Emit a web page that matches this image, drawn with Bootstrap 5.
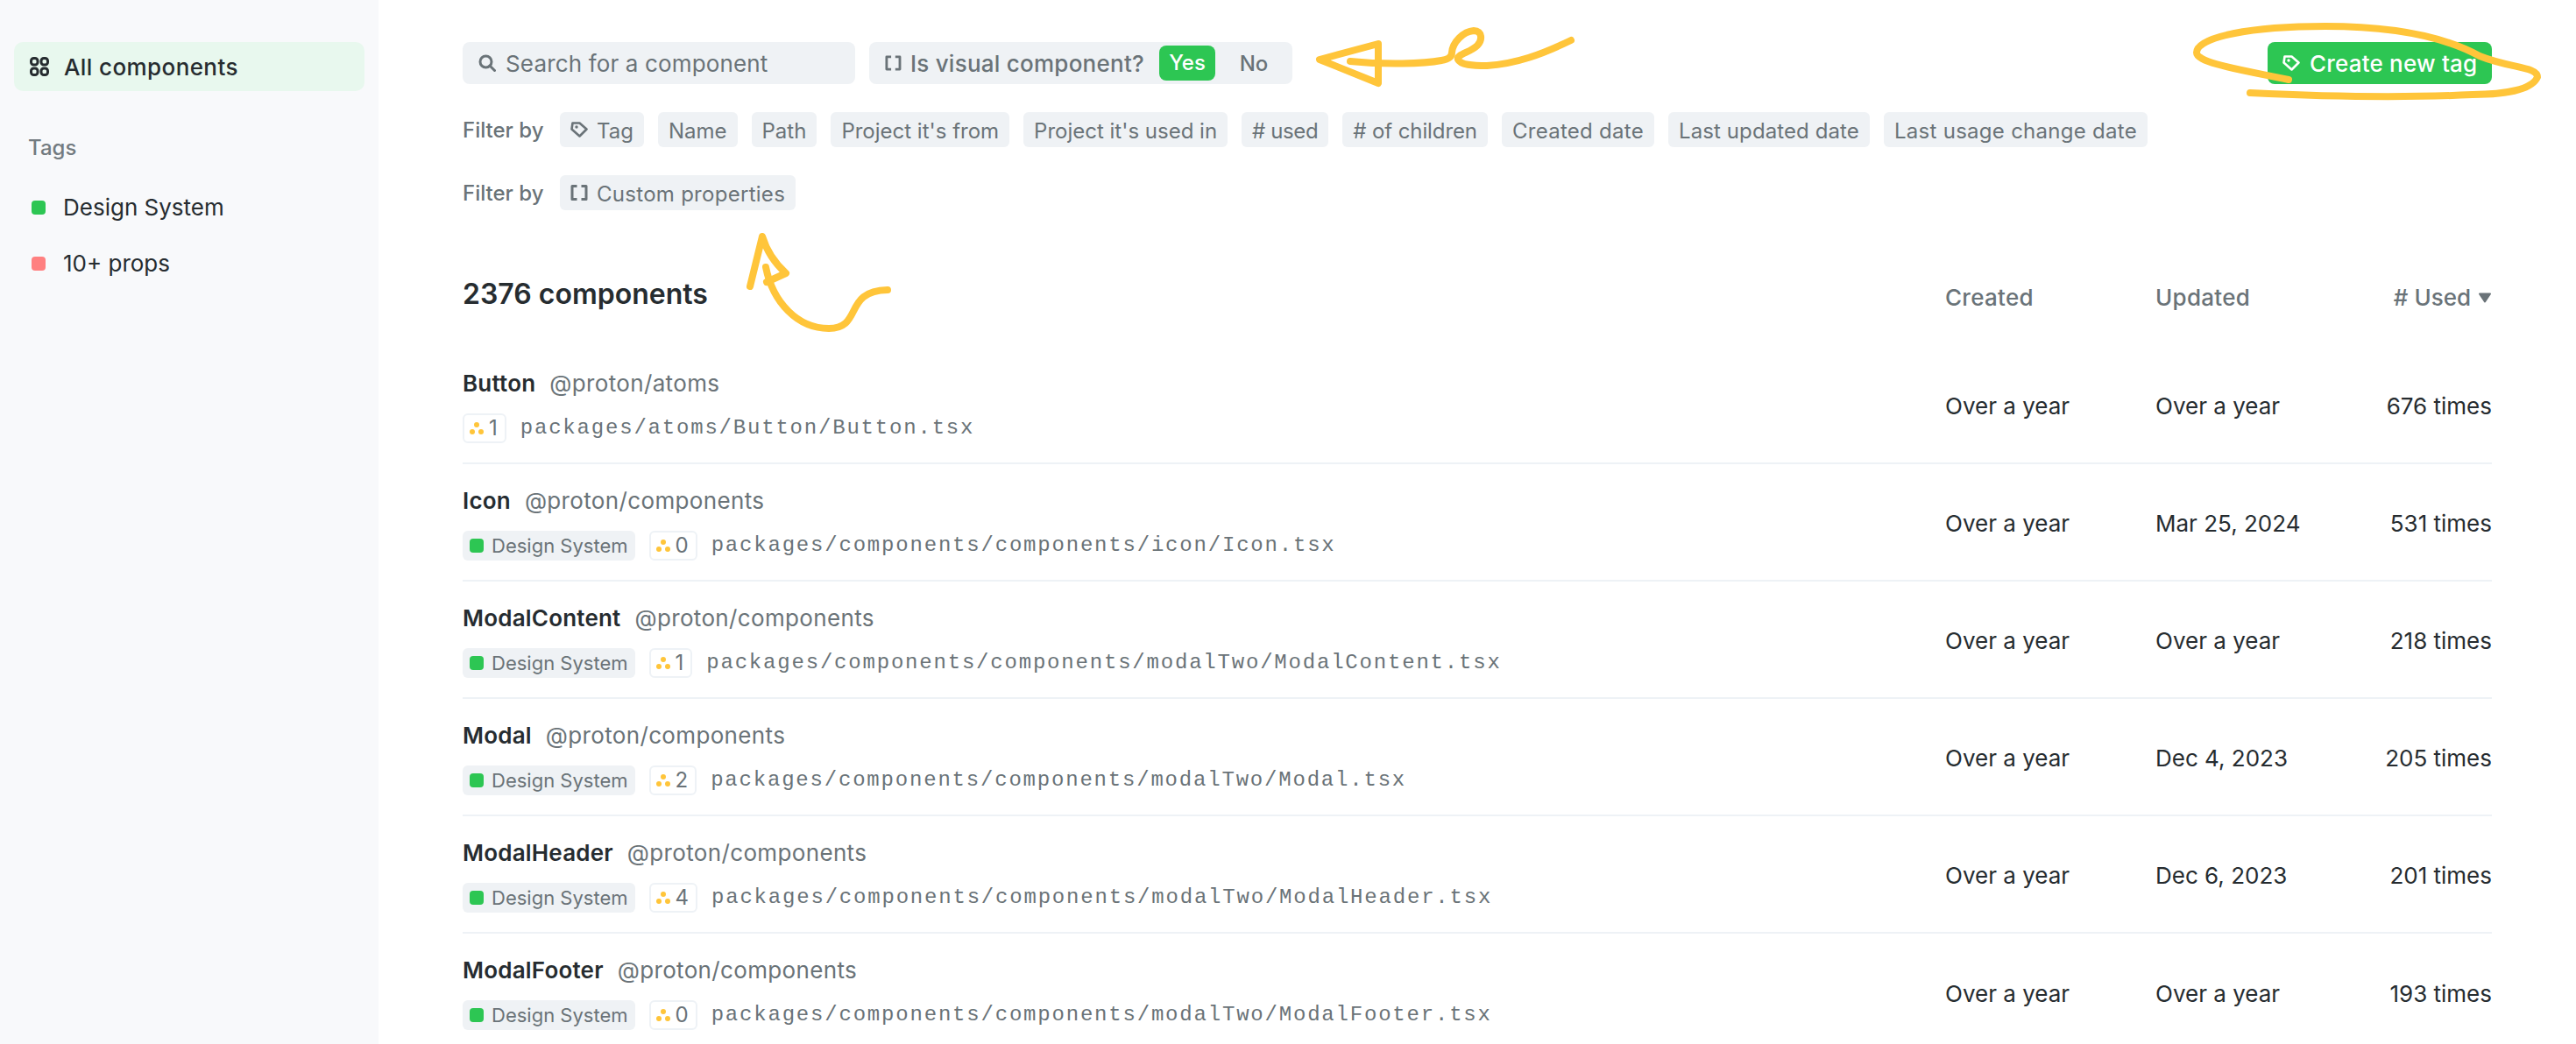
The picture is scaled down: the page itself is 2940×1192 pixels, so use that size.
<!DOCTYPE html>
<html lang="en">

<head>
    <meta charset="UTF-8">
    <meta name="viewport" content="width=device-width, initial-scale=1.0">
    <title>Components</title>
    <link href="https://cdn.jsdelivr.net/npm/bootstrap@5.3.0/dist/css/bootstrap.min.css" rel="stylesheet">
    <style>
        html, body {
            height: 1192px;
            overflow: hidden;
        }

        body {
            font-family: Inter, "Liberation Sans", sans-serif;
            font-size: 26px;
            line-height: 32px;
            color: #262c30;
            background: #fff;
            position: relative;
        }

        .side-col {
            width: 432px;
            height: 1192px;
            flex: none;
            padding: 48px 16px;
            background: #f8f9fb;
        }

        .side-active {
            height: 56px;
            padding-left: 18px;
            gap: 17px;
            border-radius: 10px;
            background: #e8f8ee;
            font-weight: 500;
            letter-spacing: .4px;
        }

        .side-active span {
            padding-top: 2px;
        }

        .side-title {
            margin: 49px 0 28px 16px;
            font-size: 24px;
            font-weight: 500;
            color: #737b80;
        }

        .side-item {
            height: 48px;
            margin-bottom: 16px;
            padding-left: 20px;
            gap: 20px;
        }

        .tag-dot {
            width: 16px;
            height: 16px;
            flex: none;
            border-radius: 4px;
        }

        .dot-green { background: #2dc653; }
        .dot-red { background: #ff8080; }

        .main-col {
            width: 2508px;
            padding: 48px 96px 0;
        }

        .top-box {
            height: 48px;
            border-radius: 8px;
            background: #eff2f5;
            color: #6a7378;
            white-space: nowrap;
        }

        .top-box span {
            padding-top: 2px;
        }

        .search-box {
            width: 448px;
            padding-left: 18px;
            gap: 11px;
            letter-spacing: .15px;
        }

        .visual-box {
            width: 483px;
            padding: 4px 0 4px 18px;
            gap: 10px;
            font-weight: 500;
            letter-spacing: .25px;
        }

        .top-box .visual-yes {
            width: 64px;
            height: 40px;
            flex: none;
            margin-left: 7px;
            padding-top: 0;
            border-radius: 8px;
            background: #2dc653;
            color: #fff;
            font-size: 24px;
            letter-spacing: 0;
        }

        .visual-no {
            width: 88px;
            flex: none;
            margin-left: -10px;
            font-size: 24px;
            letter-spacing: 0;
        }

        .new-tag-btn {
            width: 256px;
            height: 48px;
            padding-left: 17px;
            gap: 11px;
            border-radius: 8px;
            background: #2dc653;
            color: #fff;
            font-weight: 500;
            letter-spacing: .2px;
        }

        .new-tag-btn span {
            padding-top: 2px;
        }

        .filter-line {
            gap: 16px;
            margin-top: 32px;
            font-size: 24px;
            color: #6a7378;
        }

        .filter-label {
            width: 95px;
            font-weight: 500;
            padding-top: 2px;
        }

        .filter-chip {
            height: 40px;
            padding: 3px 12px 0;
            gap: 10px;
            border-radius: 6px;
            background: #eff2f5;
        }

        .filter-chip svg {
            margin-top: -3px;
        }

        .chip-tight { letter-spacing: -.4px; }
        .chip-tight-sm { letter-spacing: -.1px; }
        .chip-wide-sm { letter-spacing: .1px; }
        .chip-wide { letter-spacing: .28px; }

        .list-head {
            height: 48px;
            margin-top: 72px;
            margin-bottom: 36px;
        }

        .list-title {
            font-size: 32px;
            font-weight: 600;
            margin: 0;
            line-height: 48px;
        }

        .head-cell {
            font-weight: 500;
            color: #6a7378;
            padding-top: 8px;
        }

        .head-date {
            letter-spacing: .3px;
        }

        .cell-date {
            width: 240px;
            flex: none;
        }

        .cell-used {
            width: 144px;
            flex: none;
            white-space: nowrap;
        }

        .row-cell {
            padding-top: 4px;
        }

        .comp-row {
            height: 134px;
            border-bottom: 2px solid #eef2f6;
        }

        .comp-row:last-child {
            border-bottom: 0;
        }

        .comp-main {
            padding-top: 26px;
        }

        .comp-name {
            font-weight: 600;
            letter-spacing: .2px;
            margin-right: 16px;
        }

        .comp-project {
            color: #6a7378;
            letter-spacing: .35px;
        }

        .comp-meta {
            height: 34px;
            margin-top: 18px;
            gap: 16px;
            font-size: 22px;
            color: #6a7378;
        }

        .ds-badge {
            height: 34px;
            padding: 0 8px 0 8px;
            gap: 9px;
            border-radius: 6px;
            background: #eff2f5;
        }

        .child-badge {
            height: 34px;
            padding: 0 8px 0 6px;
            gap: 6px;
            border: 2px solid #eef2f6;
            border-radius: 6px;
            font-size: 24px;
        }

        .comp-path {
            font-family: "Liberation Mono", monospace;
            font-size: 24px;
            letter-spacing: 1.8px;
        }

        .scribble-layer {
            position: absolute;
            top: 0;
            left: 0;
            pointer-events: none;
        }
    </style>
</head>

<body>
    <svg width="0" height="0" class="d-block">
        <symbol id="ico-tag" viewBox="0 0 20 18">
            <path d="M2.5 1.5H10.5L18.5 8.5L10.5 16.5L1.5 8.5Z" fill="none" stroke="currentColor" stroke-width="2.6" stroke-linejoin="round" />
            <circle cx="7" cy="6" r="1.7" fill="currentColor" />
        </symbol>
        <symbol id="ico-bracket" viewBox="0 0 20 18">
            <path d="M7.5 1.5H2V16.5H7.5M12.5 1.5H18V16.5H12.5" fill="none" stroke="currentColor" stroke-width="3" stroke-linejoin="round" />
        </symbol>
        <symbol id="ico-kids" viewBox="0 0 16 16">
            <circle cx="8" cy="4" r="3" fill="#ffc53a" />
            <circle cx="3" cy="12" r="3" fill="#ffc53a" />
            <circle cx="13" cy="12" r="3" fill="#ffc53a" />
        </symbol>
    </svg>

    <div class="d-flex">
        <div class="side-col">
            <div class="side-active d-flex align-items-center">
                <svg width="22" height="22" viewBox="0 0 22 22" fill="none" stroke="currentColor" stroke-width="3">
                    <rect x="1.5" y="1.5" width="7.5" height="7.5" rx="3" />
                    <rect x="13" y="1.5" width="7.5" height="7.5" rx="3" />
                    <rect x="1.5" y="13" width="7.5" height="7.5" rx="3" />
                    <rect x="13" y="13" width="7.5" height="7.5" rx="3" />
                </svg>
                <span>All components</span>
            </div>
            <div class="side-title">Tags</div>
            <div class="side-item d-flex align-items-center"><span class="tag-dot dot-green"></span>Design System</div>
            <div class="side-item d-flex align-items-center"><span class="tag-dot dot-red"></span>10+ props</div>
        </div>

        <div class="main-col">
            <div class="d-flex justify-content-between">
                <div class="d-flex gap-3">
                    <div class="top-box search-box d-flex align-items-center">
                        <svg width="20" height="20" viewBox="0 0 20 20" fill="none" stroke="currentColor" stroke-width="3">
                            <circle cx="8.5" cy="8.5" r="6.5" />
                            <path d="M13 13L18.5 18.5" stroke-linecap="round" />
                        </svg>
                        <span>Search for a component</span>
                    </div>
                    <div class="top-box visual-box d-flex align-items-center">
                        <svg width="20" height="18"><use href="#ico-bracket" /></svg>
                        <span>Is visual component?</span>
                        <span class="visual-yes d-flex align-items-center justify-content-center">Yes</span>
                        <span class="visual-no text-center">No</span>
                    </div>
                </div>
                <div class="new-tag-btn d-flex align-items-center">
                    <svg width="20" height="18"><use href="#ico-tag" /></svg>
                    <span>Create new tag</span>
                </div>
            </div>

            <div class="filter-line d-flex align-items-center">
                <span class="filter-label">Filter by</span>
                <span class="filter-chip d-flex align-items-center"><svg width="20" height="18"><use href="#ico-tag" /></svg>Tag</span>
                <span class="filter-chip d-flex align-items-center">Name</span>
                <span class="filter-chip d-flex align-items-center">Path</span>
                <span class="filter-chip d-flex align-items-center">Project it's from</span>
                <span class="filter-chip d-flex align-items-center">Project it's used in</span>
                <span class="filter-chip chip-tight d-flex align-items-center"># used</span>
                <span class="filter-chip chip-tight-sm d-flex align-items-center"># of children</span>
                <span class="filter-chip chip-wide d-flex align-items-center">Created date</span>
                <span class="filter-chip chip-wide-sm d-flex align-items-center">Last updated date</span>
                <span class="filter-chip chip-wide d-flex align-items-center">Last usage change date</span>
            </div>
            <div class="filter-line d-flex align-items-center">
                <span class="filter-label">Filter by</span>
                <span class="filter-chip chip-wide d-flex align-items-center"><svg width="20" height="18"><use href="#ico-bracket" /></svg>Custom properties</span>
            </div>

            <div class="list-head d-flex align-items-center">
                <h2 class="list-title flex-grow-1">2376 components</h2>
                <div class="cell-date head-cell head-date">Created</div>
                <div class="cell-date head-cell head-date">Updated</div>
                <div class="cell-used head-cell d-flex align-items-center justify-content-end gap-2">
                    <span># Used</span>
                    <svg width="16" height="12" viewBox="0 0 16 12"><path d="M2 1.5H14L8 10.5Z" fill="#6a7378" stroke="#6a7378" stroke-width="2" stroke-linejoin="round" /></svg>
                </div>
            </div>

            <div id="compList"></div>
        </div>
    </div>

    <svg class="scribble-layer" width="2940" height="1192" viewBox="0 0 2940 1192" fill="none" stroke="#ffc53a" stroke-width="8" stroke-linecap="round" stroke-linejoin="round">
        <path d="M1573 50L1506 68L1573 95Z" />
        <path d="M1541 70C1580 74 1625 73 1645 69C1652 68 1657 65 1657 60C1658 48 1670 36 1682 35C1692 35 1692 46 1686 52C1678 60 1662 62 1664 68C1667 74 1680 75 1697 75C1730 73 1760 62 1793 46" />
        <path d="M2612 91C2560 80 2507 72 2507 60C2507 42 2570 30 2654 30C2730 30 2790 42 2830 64C2865 78 2896 76 2896 88C2890 102 2860 108 2822 108C2740 112 2650 110 2568 106" />
        <path d="M856 327L870 270C876 290 886 302 897 312L875 322" />
        <path d="M874 305C882 345 910 375 946 375C985 375 962 332 1013 331" />
    </svg>

    <script src="https://cdn.jsdelivr.net/npm/bootstrap@5.3.0/dist/js/bootstrap.bundle.min.js"></script>
    <script>
        const rows = [
            ['Button', '@proton/atoms', false, 1, 'packages/atoms/Button/Button.tsx', 'Over a year', 'Over a year', 676],
            ['Icon', '@proton/components', true, 0, 'packages/components/components/icon/Icon.tsx', 'Over a year', 'Mar 25, 2024', 531],
            ['ModalContent', '@proton/components', true, 1, 'packages/components/components/modalTwo/ModalContent.tsx', 'Over a year', 'Over a year', 218],
            ['Modal', '@proton/components', true, 2, 'packages/components/components/modalTwo/Modal.tsx', 'Over a year', 'Dec 4, 2023', 205],
            ['ModalHeader', '@proton/components', true, 4, 'packages/components/components/modalTwo/ModalHeader.tsx', 'Over a year', 'Dec 6, 2023', 201],
            ['ModalFooter', '@proton/components', true, 0, 'packages/components/components/modalTwo/ModalFooter.tsx', 'Over a year', 'Over a year', 193]
        ];

        document.getElementById('compList').innerHTML = rows.map(r => `
            <div class="comp-row d-flex align-items-center">
                <div class="comp-main flex-grow-1 align-self-start">
                    <div><span class="comp-name">${r[0]}</span><span class="comp-project">${r[1]}</span></div>
                    <div class="comp-meta d-flex align-items-center">
                        ${r[2] ? '<span class="ds-badge d-flex align-items-center"><span class="tag-dot dot-green"></span>Design System</span>' : ''}
                        <span class="child-badge d-flex align-items-center"><svg width="16" height="16"><use href="#ico-kids" /></svg>${r[3]}</span>
                        <span class="comp-path">${r[4]}</span>
                    </div>
                </div>
                <div class="cell-date row-cell">${r[5]}</div>
                <div class="cell-date row-cell">${r[6]}</div>
                <div class="cell-used row-cell text-end">${r[7]} times</div>
            </div>`).join('');
    </script>
</body>

</html>
